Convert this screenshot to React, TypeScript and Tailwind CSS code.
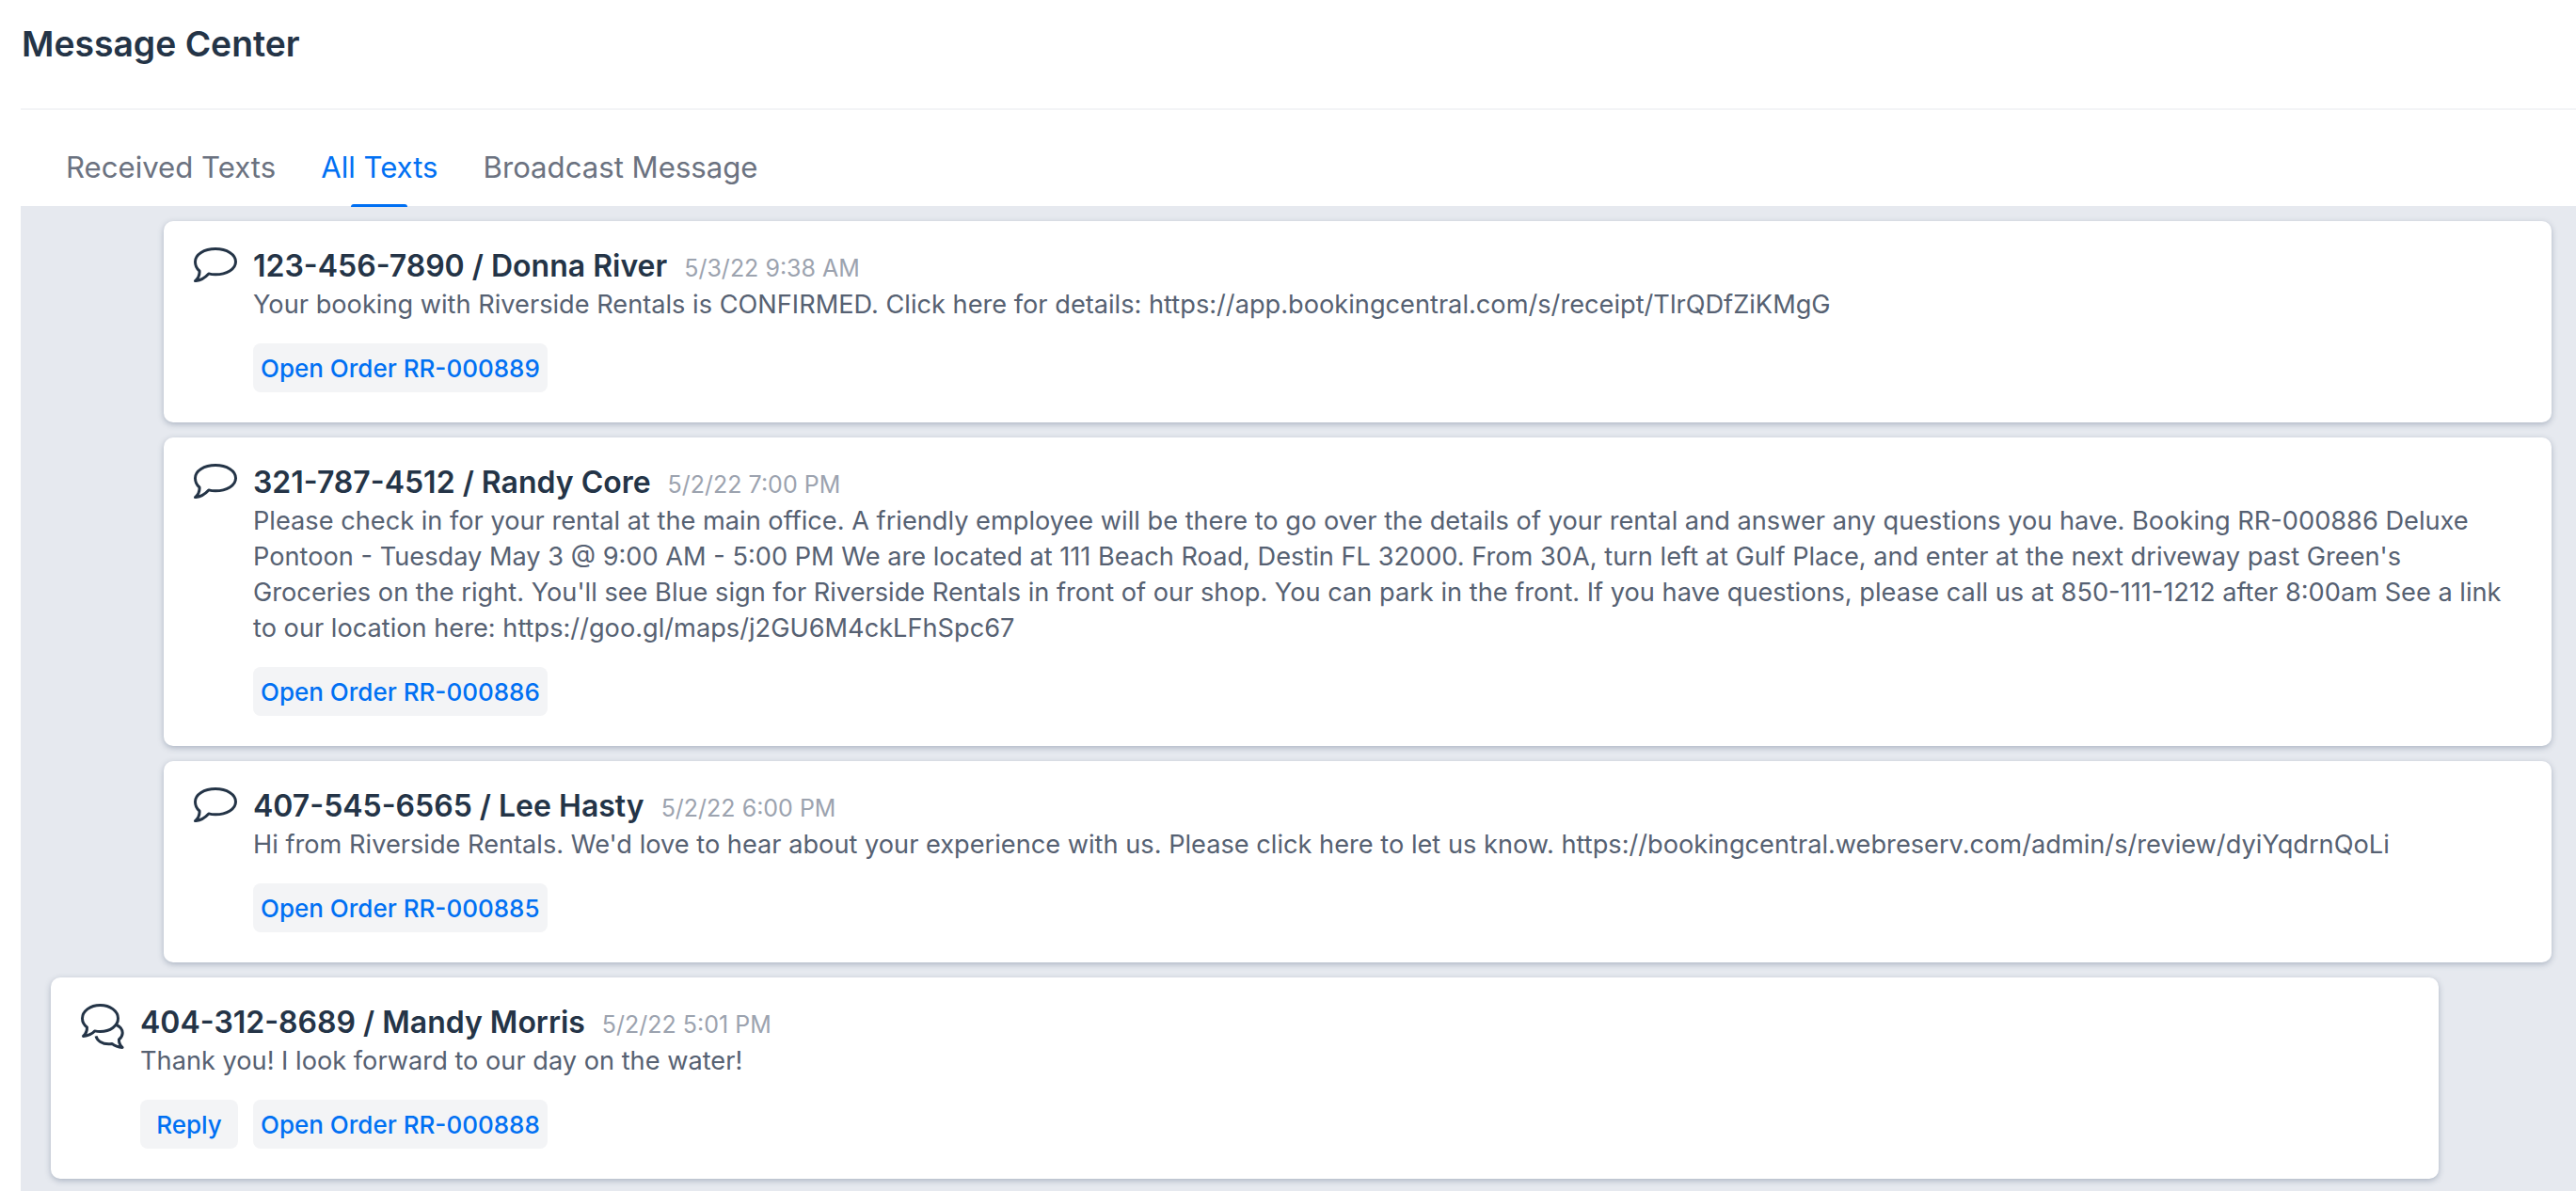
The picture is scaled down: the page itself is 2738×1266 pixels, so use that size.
const SANS = "font-['Inter',sans-serif]";

type Message = {
  id: string;
  sender: string;
  time: string;
  body: string;
  order: string;
  received?: boolean;
};

const messages: Message[] = [
  {
    id: "889",
    sender: "123-456-7890 / Donna River",
    time: "5/3/22 9:38 AM",
    body: "Your booking with Riverside Rentals is CONFIRMED. Click here for details: https://app.bookingcentral.com/s/receipt/TlrQDfZiKMgG",
    order: "RR-000889",
  },
  {
    id: "886",
    sender: "321-787-4512 / Randy Core",
    time: "5/2/22 7:00 PM",
    body: "Please check in for your rental at the main office. A friendly employee will be there to go over the details of your rental and answer any questions you have. Booking RR-000886 Deluxe Pontoon - Tuesday May 3 @ 9:00 AM - 5:00 PM We are located at 111 Beach Road, Destin FL 32000. From 30A, turn left at Gulf Place, and enter at the next driveway past Green's Groceries on the right. You'll see Blue sign for Riverside Rentals in front of our shop. You can park in the front. If you have questions, please call us at 850-111-1212 after 8:00am See a link to our location here: https://goo.gl/maps/j2GU6M4ckLFhSpc67",
    order: "RR-000886",
  },
  {
    id: "885",
    sender: "407-545-6565 / Lee Hasty",
    time: "5/2/22 6:00 PM",
    body: "Hi from Riverside Rentals. We'd love to hear about your experience with us. Please click here to let us know. https://bookingcentral.webreserv.com/admin/s/review/dyiYqdrnQoLi",
    order: "RR-000885",
  },
  {
    id: "888",
    sender: "404-312-8689 / Mandy Morris",
    time: "5/2/22 5:01 PM",
    body: "Thank you! I look forward to our day on the water!",
    order: "RR-000888",
    received: true,
  },
];

function BubbleIcon() {
  return (
    <svg width="46" height="37" viewBox="0 0 46 37" fill="none" stroke="#243447" strokeWidth="3" strokeLinejoin="round" className="shrink-0">
      <path d="M6 25C2.8 22.3 1.5 18.8 1.5 15.2C1.5 7.4 11 1.5 23 1.5C35 1.5 44.5 7.4 44.5 15.2C44.5 23 35 28.8 23 28.8C20.4 28.8 18 28.5 15.8 27.9C12.4 31.6 7.4 35.2 1.5 35.6C4.6 32.8 6.4 29 6 25Z" />
    </svg>
  );
}

function BubblesIcon() {
  return (
    <svg width="46" height="48" viewBox="0 0 46 48" fill="none" stroke="#243447" strokeWidth="3" strokeLinejoin="round" className="shrink-0">
      <path d="M6.5 25C3.2 22.6 1.5 19.2 1.5 15.6C1.5 7.8 9.8 1.5 20.5 1.5C31.2 1.5 39.5 7.8 39.5 15.6C39.5 23.4 31.2 29.6 20.5 29.6C18.4 29.6 16.4 29.3 14.6 28.9C12 31.8 7.8 33.8 2.5 34.4C5.2 32 6.7 28.8 6.5 25Z" />
      <path d="M37.4 22.4C41.6 24.2 44.2 27.4 44.2 31C44.2 33.8 42.8 36.2 40.4 38C40.4 41.2 41.6 44.2 44 46.4C39.4 46.2 35.6 44.6 33 42.4C31.8 42.6 30.6 42.8 29.4 42.8C22.6 42.8 17.4 39.4 16 34.4" />
    </svg>
  );
}

function ActionButton({ label, className }: { label: string; className: string }) {
  return (
    <button className={`h-[52px] rounded-lg bg-[#f3f4f6] pt-[1px] text-[26px] leading-[40px] font-medium text-[#0070f3] ${className}`}>
      {label}
    </button>
  );
}

function MessageCard({ message }: { message: Message }) {
  return (
    <div
      className={`flex w-[2538px] gap-[17px] rounded-[10px] bg-white pt-[25px] pr-[32px] pb-[32px] pl-[32px] shadow-[0_2px_6px_rgba(100,116,139,0.45)] ${
        message.received ? "ml-[32px]" : "ml-[152px]"
      }`}
    >
      <div className="pt-[3px]">{message.received ? <BubblesIcon /> : <BubbleIcon />}</div>
      <div className="min-w-0 flex-1">
        <div className="flex items-baseline gap-[18px]">
          <span className="text-[32px] leading-[45px] font-semibold text-[#243447]">{message.sender}</span>
          <span className="text-[25px] leading-[36px] text-[#9ca3af]">{message.time}</span>
        </div>
        <p className="text-[27.2px] leading-[38px] text-[#566172]">{message.body}</p>
        <div className="mt-[22px] flex gap-[16px]">
          {message.received && <ActionButton label="Reply" className="w-[104px]" />}
          <ActionButton label={`Open Order ${message.order}`} className="px-[8px]" />
        </div>
      </div>
    </div>
  );
}

export default function App() {
  const tabs = ["Received Texts", "All Texts", "Broadcast Message"];

  return (
    <div className={`flex h-screen flex-col overflow-hidden bg-white ${SANS}`}>
      {/* Header */}
      <div className="ml-[22px] flex h-[117px] items-center border-b-2 border-[#f3f4f6]">
        <h1 className="-mt-[22px] ml-[1px] text-[37.3px] font-semibold text-[#243447]">Message Center</h1>
      </div>

      {/* Tabs */}
      <div className="ml-[22px] flex h-[102px] gap-[48px] pl-[48px]">
        {tabs.map((tab) => (
          <div key={tab} className="relative flex items-center pt-[20px]">
            <span className={`text-[31.15px] ${tab === "All Texts" ? "text-[#0070f3]" : "text-[#6b7280]"}`}>{tab}</span>
            {tab === "All Texts" && (
              <span className="absolute bottom-[-1px] left-1/2 h-[3px] w-[60px] -translate-x-1/2 rounded-t bg-[#0070f3]" />
            )}
          </div>
        ))}
      </div>

      {/* Message list */}
      <div className="ml-[22px] flex-1 overflow-hidden bg-[#e6e9ef]">
        <div className="ml-[152px] mb-[16px] h-0 w-[2538px] shadow-[0_2px_6px_rgba(100,116,139,0.45)]" />
        <div className="flex flex-col gap-[16px]">
          {messages.map((message) => (
            <MessageCard key={message.id} message={message} />
          ))}
        </div>
      </div>
    </div>
  );
}
